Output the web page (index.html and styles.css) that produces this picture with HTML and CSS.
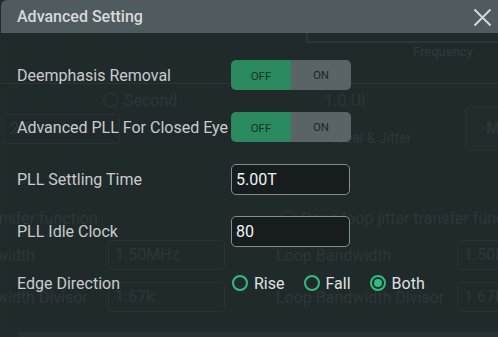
FILE: index.html
```html
<!DOCTYPE html>
<html>
<head>
<meta charset="utf-8">
<link rel="stylesheet" href="styles.css">
</head>
<body>
<div class="page">
  <div class="chart-row"><div class="chart"></div></div>
  <div class="freq">Frequency</div>
  <div class="rule"></div>
  <div class="bg-a">
    <span class="bg-radio-wrap"><span class="bg-radio"></span>Second</span>
    <span class="bg-ui">1.0 UI</span>
  </div>
  <div class="bg-b">
    <div class="bg-input first">2.5</div>
    <div class="bg-ideal">Ideal &amp; Jitter</div>
    <div class="bg-btn">Me</div>
  </div>
  <div class="bg-c">
    <span class="bg-cut">ansfer function</span>
    <span class="bg-radio-wrap open"><span class="bg-radio"></span>Open loop jitter transfer function</span>
  </div>
  <div class="bg-row">
    <span class="bg-l">width</span>
    <div class="bg-input mid">1.50MHz</div>
    <span class="bg-r">Loop Bandwidth</span>
    <div class="bg-input end">1.50MHz</div>
  </div>
  <div class="bg-row second">
    <span class="bg-l">width Divisor</span>
    <div class="bg-input mid">1.67k</div>
    <span class="bg-r">Loop Bandwidth Divisor</span>
    <div class="bg-input end">1.67k</div>
  </div>
  <div class="bg-bottom"><div class="bg-bar"></div></div>
</div>

<div class="dialog">
  <div class="dlg-head">
    <span class="dlg-title">Advanced Setting</span>
    <svg class="close" width="19" height="19" viewBox="0 0 19 19"><path d="M1.5 1.5 L17.5 17.5 M17.5 1.5 L1.5 17.5" stroke="#d4d8d9" stroke-width="2" fill="none"/></svg>
  </div>
  <div class="dlg-body">
    <div class="row">
      <span class="label">Deemphasis Removal</span>
      <div class="toggle"><span class="seg off">OFF</span><span class="seg on">ON</span></div>
    </div>
    <div class="row">
      <span class="label">Advanced PLL For Closed Eye</span>
      <div class="toggle"><span class="seg off">OFF</span><span class="seg on">ON</span></div>
    </div>
    <div class="row">
      <span class="label">PLL Settling Time</span>
      <div class="input">5.00T</div>
    </div>
    <div class="row">
      <span class="label">PLL Idle Clock</span>
      <div class="input">80</div>
    </div>
    <div class="row">
      <span class="label">Edge Direction</span>
      <div class="radios">
        <span class="radio"><span class="circle"></span>Rise</span>
        <span class="radio"><span class="circle"></span>Fall</span>
        <span class="radio"><span class="circle checked"></span>Both</span>
      </div>
    </div>
  </div>
</div>
</body>
</html>
```
FILE: styles.css
```css
html, body {
  margin: 0;
  padding: 0;
}
body {
  width: 498px;
  height: 337px;
  overflow: hidden;
  position: relative;
  background: #212a2c;
  font-family: Roboto, "Noto Sans", sans-serif;
}

/* background page (seen faintly through the dialog) */
.page {
  color: #323b3d;
  font-size: 16px;
  height: 337px;
  overflow: hidden;
}
.chart-row {
  height: 43px;
  padding-top: 28px;
  box-sizing: border-box;
}
.chart {
  margin-left: 306px;
  height: 13px;
  border-left: 2px solid #323c3e;
  border-bottom: 2px solid #323c3e;
}
.freq {
  padding-left: 413px;
  height: 20px;
  line-height: 18px;
  font-size: 13px;
  color: #374143;
}
.rule {
  margin-top: 20px;
  height: 1px;
  background: #2f393b;
}
.bg-a {
  display: flex;
  align-items: center;
  height: 28px;
  margin-top: 2px;
}
.bg-radio-wrap {
  display: flex;
  align-items: center;
  gap: 5px;
  margin-left: 103px;
  flex-shrink: 0;
}
.bg-radio {
  width: 12px;
  height: 12px;
  border: 2px solid #2a3436;
  border-radius: 50%;
}
.bg-ui {
  margin-left: 147px;
}
.bg-b {
  display: flex;
  align-items: flex-start;
  height: 92px;
}
.bg-input {
  border: 1px solid #2b3537;
  border-radius: 4px;
  height: 28px;
  line-height: 28px;
  box-sizing: border-box;
  padding-left: 6px;
  flex-shrink: 0;
  white-space: nowrap;
  overflow: hidden;
}
.bg-input.first {
  margin-left: 3px;
  width: 117px;
  height: 30px;
}
.bg-ideal {
  margin-left: 213px;
  margin-top: 16px;
  width: 132px;
  font-size: 14px;
  flex-shrink: 0;
  white-space: nowrap;
}
.bg-btn {
  margin-top: -8px;
  width: 40px;
  height: 43px;
  flex-shrink: 0;
  border: 1px solid #2b3537;
  border-radius: 4px;
  background: #242d2f;
  line-height: 43px;
  padding-left: 20px;
  font-weight: 700;
  font-size: 16px;
}
.bg-c {
  display: flex;
  align-items: center;
  height: 24px;
}
.bg-cut {
  margin-left: -10px;
  width: 280px;
  flex-shrink: 0;
  white-space: nowrap;
}
.bg-radio-wrap.open {
  margin-left: 10px;
  white-space: nowrap;
}
.bg-row {
  display: flex;
  align-items: center;
  height: 30px;
  margin-top: 10px;
  white-space: nowrap;
}
.bg-row.second {
  margin-top: 12px;
}
.bg-l {
  margin-left: -4px;
  width: 112px;
  flex-shrink: 0;
}
.bg-input.mid {
  width: 117px;
  height: 30px;
}
.bg-r {
  margin-left: 51px;
  width: 181px;
  flex-shrink: 0;
}
.bg-input.end {
  width: 60px;
  height: 30px;
}
.bg-bottom {
  margin-top: 20px;
  height: 20px;
}
.bg-bar {
  margin-left: 18px;
  height: 20px;
  background: #283133;
}

/* dialog */
.dialog {
  position: absolute;
  left: 1px;
  top: 0;
  width: 505px;
  height: 328px;
  border-radius: 6px;
  overflow: hidden;
  background: rgba(33, 42, 44, 0.3);
}
.dlg-head {
  height: 33px;
  background: #4f5b5e;
  display: flex;
  align-items: center;
  padding-left: 16px;
  padding-right: 14px;
  justify-content: space-between;
}
.dlg-title {
  color: #d7dadb;
  font-size: 16px;
  font-weight: 500;
  margin-top: -1px;
}
.close {
  margin-top: 2px;
}
.dlg-body {
  padding-top: 16px;
  padding-left: 16px;
}
.row {
  display: grid;
  grid-template-columns: 214px auto;
  align-items: center;
  height: 52px;
}
.label {
  color: #c8cccd;
  font-size: 16px;
  white-space: nowrap;
}
.toggle {
  display: flex;
  width: 120px;
  height: 30px;
  border-radius: 5px;
  overflow: hidden;
}
.seg {
  flex: 1;
  display: flex;
  align-items: center;
  justify-content: center;
  font-size: 11.5px;
}
.seg.off {
  background: #2b8a5d;
  color: #163424;
  padding-top: 2px;
}
.seg.on {
  background: #5a6467;
  color: #1d2628;
}
.input {
  width: 119px;
  height: 31px;
  box-sizing: border-box;
  border: 1px solid #858d8f;
  border-radius: 5px;
  background: #171d1f;
  color: #f1f2f2;
  font-size: 16px;
  line-height: 29px;
  padding-left: 4px;
}
.radios {
  display: flex;
  align-items: center;
  gap: 19px;
  margin-left: 1px;
}
.radio {
  display: flex;
  align-items: center;
  gap: 6px;
  color: #dfe2e2;
  font-size: 16px;
}
.circle {
  width: 16px;
  height: 16px;
  box-sizing: border-box;
  border: 2px solid #30bd80;
  border-radius: 50%;
  display: flex;
  align-items: center;
  justify-content: center;
}
.circle.checked::after {
  content: "";
  width: 8px;
  height: 8px;
  border-radius: 50%;
  background: #30bd80;
}
```
